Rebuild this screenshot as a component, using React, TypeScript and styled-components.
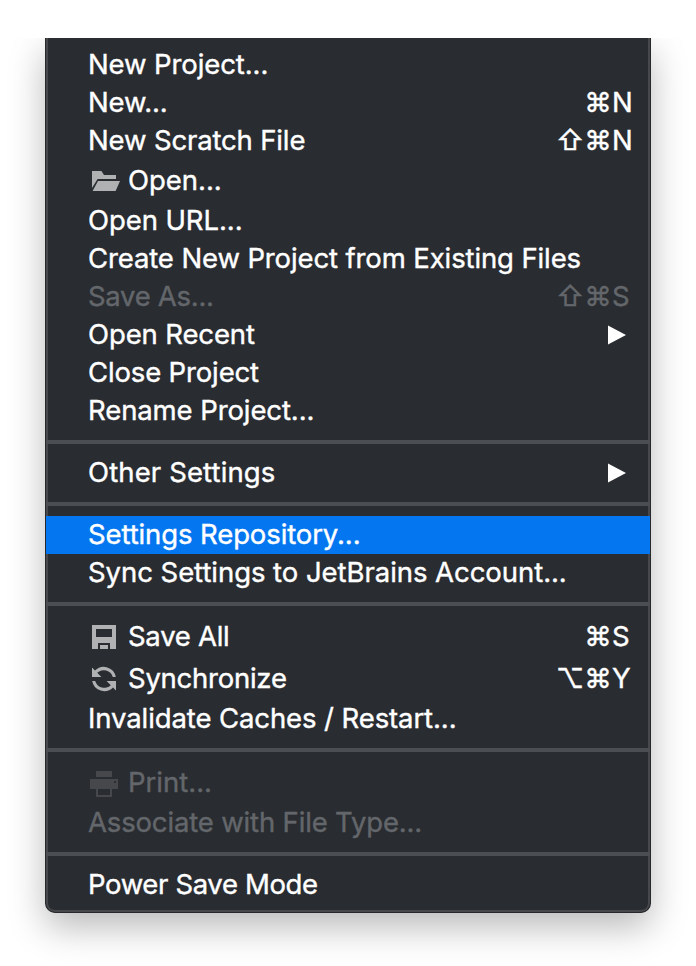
import React from "react";
import styled, { createGlobalStyle } from "styled-components";

const GlobalStyle = createGlobalStyle`
  * { box-sizing: border-box; }
  body { margin: 0; background: #fff; }
`;

const Screen = styled.main`
  width: 696px;
  height: 966px;
  padding-top: 38px;
  background: #fff;
`;

/* Cuts the menu's shadow off along the menu's top edge. */
const Stage = styled.div`
  height: 928px;
  padding-left: 45px;
  overflow: hidden;
`;

const Menu = styled.nav`
  width: 606px;
  height: 875px;
  padding-top: 8px;
  border: 1px solid #26282b;
  border-top: 0;
  border-radius: 0 0 10px 10px;
  background: #292c31;
  box-shadow:
    inset 2px 0 0 #46484b,
    inset -2px 0 0 #46484b,
    inset 0 -2px 0 #46484b,
    0 14px 36px rgba(0, 0, 0, 0.28);
  font-family: Inter, "Liberation Sans", sans-serif;
  font-size: 27.5px;
  -webkit-text-stroke: 0.4px currentColor;
  color: #fff;
`;

const Row = styled.div<{ $tall: boolean; $selected?: boolean; $disabled?: boolean }>`
  display: flex;
  align-items: center;
  height: ${(p) => (p.$tall ? 42 : 38)}px;
  padding: 0 17px 0 42px;
  line-height: 38px;
  white-space: pre;
  background: ${(p) => (p.$selected ? "#0477f0" : "transparent")};
  color: ${(p) => (p.$disabled ? "#63666a" : "#fff")};
`;

const Label = styled.span<{ $tracking: number; $tall: boolean }>`
  letter-spacing: ${(p) => p.$tracking}px;
  margin-top: ${(p) => (p.$tall ? -3 : -2)}px;
`;

const Icon = styled.svg`
  width: 32px;
  height: 32px;
  margin-right: 8px;
  flex: none;
`;

const Keys = styled.span<{ $tall: boolean }>`
  display: flex;
  margin-left: auto;
  margin-top: ${(p) => (p.$tall ? -3 : -2)}px;
`;

const Key = styled.kbd<{ $modifier: boolean }>`
  width: ${(p) => (p.$modifier ? 28 : 21)}px;
  font: inherit;
  text-align: ${(p) => (p.$modifier ? "center" : "left")};
`;

const Arrow = styled.svg`
  width: 18px;
  height: 20px;
  margin-left: auto;
  margin-right: 7px;
`;

const Separator = styled.hr`
  height: 4px;
  margin: 10px 0;
  border: 0;
  background: #4b4f54;
`;

type IconName = "open" | "save" | "sync" | "print";

const icons: Record<IconName, React.ReactNode> = {
  open: (
    <g fill="#afb1b3">
      <path d="M2 3h4.700l1.300 2h6v2H4.800L2 11.500z" />
      <path d="M5 8H16l-2.200 5H2.300z" />
    </g>
  ),
  save: (
    <path
      fill="#afb1b3"
      fillRule="evenodd"
      d="M2 2h12v12h-3v-3H5v3H2zM4 4v4h8V4zM6 12h4v2H6z"
    />
  ),
  sync: (
    <g fill="#afb1b3">
      <path d="M2 2.300l1.500 1.500A6.100 6.100 0 0 1 13.900 7h-1.500A4.700 4.700 0 0 0 4.600 4.900L6.700 7H2z" />
      <path d="M14 13.700L12.500 12.200A6.100 6.100 0 0 1 2.100 9h1.500a4.700 4.700 0 0 0 7.800 2.100L9.300 9H14z" />
    </g>
  ),
  print: (
    <path
      fill="#46484b"
      fillRule="evenodd"
      d="M4 2h8v3H4zM1 6h14v5h-3v4H4v-4H1zM13 7v1h1V7zM5 11v3h6v-3z"
    />
  ),
};

interface Item {
  label: string;
  tracking: number;
  keys?: string;
  icon?: IconName;
  submenu?: boolean;
  selected?: boolean;
  disabled?: boolean;
}

const groups: Item[][] = [
  [
    { label: "New Project...", tracking: -0.1 },
    { label: "New...", tracking: -0.15, keys: "⌘N" },
    { label: "New Scratch File", tracking: -0.15, keys: "⇧⌘N" },
    { label: "Open...", tracking: -0.02, icon: "open" },
    { label: "Open URL...", tracking: -0.08 },
    { label: "Create New Project from Existing Files", tracking: -0.12 },
    { label: "Save As...", tracking: -0.3, keys: "⇧⌘S", disabled: true },
    { label: "Open Recent", tracking: -0.12, submenu: true },
    { label: "Close Project", tracking: -0.15 },
    { label: "Rename Project...", tracking: -0.1 },
  ],
  [{ label: "Other Settings", tracking: 0.13, submenu: true }],
  [
    { label: "Settings Repository...", tracking: -0.11, selected: true },
    { label: "Sync Settings to JetBrains Account...", tracking: -0.05 },
  ],
  [
    { label: "Save All", tracking: -0.27, icon: "save", keys: "⌘S" },
    { label: "Synchronize", tracking: -0.25, icon: "sync", keys: "⌥⌘Y" },
    { label: "Invalidate Caches / Restart...", tracking: -0.1 },
  ],
  [
    { label: "Print...", tracking: 0, icon: "print", disabled: true },
    { label: "Associate with File Type...", tracking: -0.16, disabled: true },
  ],
  [{ label: "Power Save Mode", tracking: -0.36 }],
];

function MenuItem({ item }: { item: Item }) {
  const tall = Boolean(item.icon);
  return (
    <Row $tall={tall} $selected={item.selected} $disabled={item.disabled}>
      {item.icon && <Icon viewBox="0 0 16 16">{icons[item.icon]}</Icon>}
      <Label $tall={tall} $tracking={item.tracking}>
        {item.label}
      </Label>
      {item.keys && (
        <Keys $tall={tall}>
          {[...item.keys].map((key) => (
            <Key key={key} $modifier={!/[A-Z]/.test(key)}>
              {key}
            </Key>
          ))}
        </Keys>
      )}
      {item.submenu && (
        <Arrow viewBox="0 0 18 20">
          <path d="M0 .5L18 10L0 19.500z" fill="#fff" />
        </Arrow>
      )}
    </Row>
  );
}

export default function App() {
  return (
    <Screen>
      <GlobalStyle />
      <Stage>
        <Menu>
          {groups.map((group, index) => (
            <React.Fragment key={group[0].label}>
              {index > 0 && <Separator />}
              {group.map((item) => (
                <MenuItem key={item.label} item={item} />
              ))}
            </React.Fragment>
          ))}
        </Menu>
      </Stage>
    </Screen>
  );
}
